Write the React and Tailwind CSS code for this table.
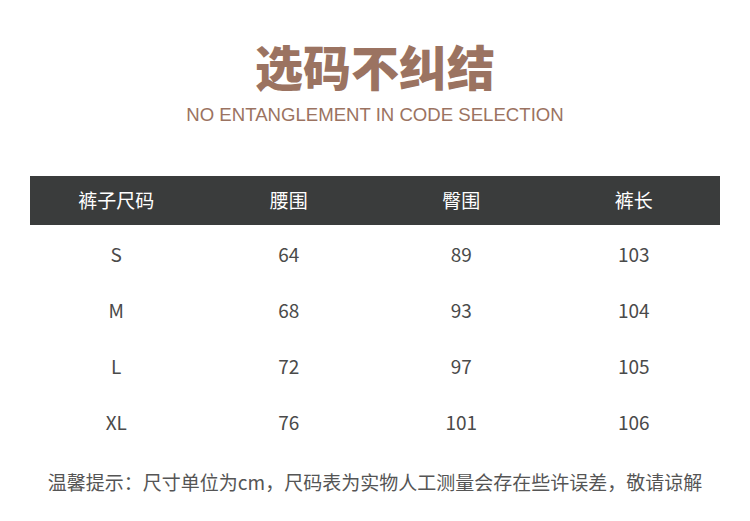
const rows = [
  ['S', '64', '89', '103'],
  ['M', '68', '93', '104'],
  ['L', '72', '97', '105'],
  ['XL', '76', '101', '106'],
]

const heads = ['裤子尺码', '腰围', '臀围', '裤长']

export default function App() {
  return (
    <div
      className="w-[750px] h-[521px] bg-white flex flex-col items-center"
      style={{ fontFamily: '"Noto Sans CJK SC", "Noto Sans", sans-serif' }}
    >
      {/* Title */}
      <h1 className="mt-[35px] text-[48px] leading-[60px] font-black text-[#9b7361]">
        选码不纠结
      </h1>
      <p
        className="mt-[8px] text-[18.6px] leading-[24px] text-[#9b7361]"
        style={{ fontFamily: '"Liberation Sans", Arial, sans-serif' }}
      >
        NO ENTANGLEMENT IN CODE SELECTION
      </p>

      {/* Size table */}
      <div className="mt-[49px] w-[690px]">
        <div className="grid grid-cols-4 h-[49px] bg-[#3a3c3c] text-white text-[19px] items-center">
          {heads.map((h) => (
            <div key={h} className="text-center">{h}</div>
          ))}
        </div>
        {rows.map((r) => (
          <div key={r[0]} className="grid grid-cols-4 h-[56px] items-center text-[19px] text-[#4a4a4a] pt-[2px]">
            {r.map((c, i) => (
              <div key={i} className="text-center">{c}</div>
            ))}
          </div>
        ))}
      </div>

      <p className="mt-[19px] text-[19px] text-[#555] leading-[28px]">
        温馨提示：尺寸单位为cm，尺码表为实物人工测量会存在些许误差，敬请谅解
      </p>
    </div>
  )
}
